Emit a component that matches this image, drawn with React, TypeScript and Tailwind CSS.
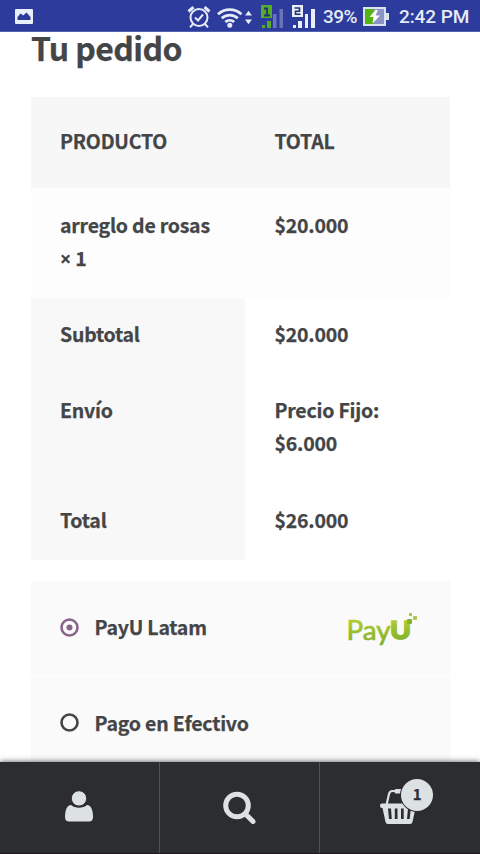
import React from "react";
import { clsx } from "clsx";

const totals = [
  { label: "Subtotal", lines: ["$20.000"] },
  { label: "Envío", lines: ["Precio Fijo:", "$6.000"] },
  { label: "Total", lines: ["$26.000"] },
];

const payments = [
  { label: "PayU Latam", selected: true, logo: true },
  { label: "Pago en Efectivo", selected: false, logo: false },
];

function StatusBar() {
  return (
    <header className="flex h-8 shrink-0 items-center border-b border-[#5260b0] bg-[#2c3b9c] pt-[2px] font-['Roboto',sans-serif] text-[19px] font-medium leading-none tracking-[-0.1px] text-[#e6ebf8] [-webkit-text-stroke:0px]">
      <svg className="ml-[15px] h-[15px] w-[18px]" viewBox="0 0 18 15">
        <rect width="18" height="15" rx="1" fill="#e8eefa" />
        <path d="M2.500 11V8L5.500 4.500l2.800 2L11.500 3.500l4 4.500v3z" fill="#2c3b9c" />
      </svg>
      {/* Alarm */}
      <svg className="ml-[154px] h-6 w-6" viewBox="0 0 24 24" fill="none" stroke="currentColor" strokeWidth="2">
        <circle cx="12" cy="12.500" r="8.500" />
        <path d="M8 12.500l3 3 5-6" />
        <path d="M1.500 6.500l5-4.300M22.500 6.500l-5-4.300" strokeWidth="3" />
        <path d="M6 19l-3 3.300M18 19l3 3.300" />
      </svg>
      {/* Wifi + traffic arrows */}
      <svg className="ml-[6px] h-[22px] w-9" viewBox="0 0 36 22" fill="none" stroke="currentColor" strokeWidth="2.800">
        <path d="M1 8.200a17.200 17.200 0 0 1 23.500 0" />
        <path d="M4.700 12.200a11.800 11.800 0 0 1 16.100 0" />
        <path d="M8.300 16a6.800 6.800 0 0 1 8.900 0" />
        <circle cx="12.800" cy="19.200" r="2.500" fill="currentColor" stroke="none" />
        <path d="M28 9.500l3.500-4.700 3.500 4.700zM28 13.500l3.500 4.700 3.500-4.700z" fill="currentColor" stroke="none" />
      </svg>
      {/* SIM 1 */}
      <svg className="ml-[8px] h-6 w-6" viewBox="0 0 24 24">
        <rect width="11" height="13" fill="#55ad27" />
        <path d="M3 3.500h3v7M3 10.500h6" fill="none" stroke="#203078" strokeWidth="1.800" />
        <path d="M1 20h3v3H1zM6 16h4v7H6z" fill="#55ad27" />
        <path d="M12 9h3.500v14H12zM18.500 4H22v19h-3.500z" fill="#6974b8" />
      </svg>
      {/* SIM 2 */}
      <svg className="ml-[7px] h-6 w-6" viewBox="0 0 24 24">
        <rect width="11" height="12" fill="#e8eefa" />
        <path d="M2.500 3h5v3.200h-4v3h5" fill="none" stroke="#203078" strokeWidth="1.600" />
        <path d="M1 20h3v3H1zM6 16h4v7H6zM13 9h3v14h-3zM19 4h4v19h-4z" fill="#e8eefa" />
      </svg>
      <span className="ml-[7px] w-[40px] tracking-[-0.500px]">39%</span>
      <svg className="h-[19px] w-[26px]" viewBox="0 0 26 19">
        <path d="M0 0h23v6h3v7h-3v6H0z" fill="#d9e2ef" />
        <path d="M2 2h9v15H2z" fill="#55b313" />
        <path d="M11 2h10v15H11z" fill="#8b95c5" />
        <path d="M12.500 3L6.500 10h4l-1 6.500L17 8.500h-4.500L15 3z" fill="#fff" />
      </svg>
      <span className="ml-[10px] whitespace-nowrap">2:42 PM</span>
    </header>
  );
}

function PayULogo() {
  return (
    <svg className="h-10 w-[76px]" viewBox="0 0 76 40">
      <defs>
        <linearGradient id="payu" x1="0" y1="0" x2="0" y2="1">
          <stop offset="0" stopColor="#c0d535" />
          <stop offset="1" stopColor="#78ad28" />
        </linearGradient>
      </defs>
      <g fill="url(#payu)" stroke="url(#payu)" fontFamily="Lato, sans-serif" letterSpacing="0">
        <text x="1.500" y="31" fontSize="27" fontWeight="400" strokeWidth="0.700" textLength="44" lengthAdjust="spacingAndGlyphs">Pay</text>
        <text x="45" y="30" fontSize="25" fontWeight="900" strokeWidth="1.500" textLength="21" lengthAdjust="spacingAndGlyphs">U</text>
      </g>
      <rect x="62" y="10" width="5" height="5" rx="1" fill="#84b425" />
      <rect x="64" y="4" width="3" height="3" fill="#a9c948" />
      <rect x="68" y="7" width="4" height="4" rx="1" fill="#a9c948" />
    </svg>
  );
}

function BottomBar() {
  return (
    <nav className="relative grid h-[92px] shrink-0 grid-cols-3 border-b border-[#25151d] bg-[#2c2d31] text-[#dce1e3] shadow-[0_0_6px_rgba(0,0,0,0.7)]">
      <a className="flex justify-center border-r border-[#505156] pt-[28px]">
        <svg className="mr-px h-8 w-7" viewBox="0 0 28 32" fill="currentColor">
          <path d="M6 15C2 15 0 20 0 27c0 3 1.500 4.500 4 4.500h20c2.500 0 4-1.500 4-4.500 0-7-2-12-6-12-2 1.700-5 2.700-8 2.700S8 16.700 6 15z" />
          <circle cx="14" cy="8.400" r="7.700" stroke="#2c2d31" />
        </svg>
      </a>
      <a className="flex justify-center border-r border-[#505156] pt-[29px]">
        <svg className="mr-px h-[33px] w-[33px]" viewBox="0 0 33 33" fill="none" stroke="currentColor">
          <circle cx="14" cy="14.500" r="11.300" strokeWidth="5" />
          <path d="M22.500 23l7.500 7.500" strokeWidth="5" strokeLinecap="round" />
        </svg>
      </a>
      <a className="relative flex justify-center pt-[26px]">
        <svg className="mr-[2px] h-9 w-[38px]" viewBox="0 0 38 36" fill="none" stroke="currentColor" strokeWidth="2.200">
          <path d="M6.500 17L9 6q.6-3 3.500-3H17M31.500 17L29 6q-.6-3-3.500-3H21" />
          <rect x="14.500" y="1" width="9" height="4.500" rx="1.500" fill="currentColor" stroke="none" />
          <path
            fillRule="evenodd"
            fill="currentColor"
            stroke="none"
            d="M2 15.500h34q2 0 2 2.200t-2 2.200h-.500l-3 14q-.4 2-2.500 2H8q-2.100 0-2.500-2l-3-14H2q-2 0-2-2.200t2-2.200zM8 20.500l1 10.500h2.800L11 20.500zM14.800 20.500V31h2.700V20.500zM21 20.500V31h2.700V20.500zM28 20.500L27 31h2.700l1.100-10.500z"
          />
        </svg>
        <span className="absolute left-[81px] top-[17px] flex h-8 w-8 items-center justify-center rounded-full bg-[#dce1e3] pb-[3px] text-[15px] text-[#2c2d31] shadow-[0_0_0_1px_#2c2d31]">
          1
        </span>
      </a>
    </nav>
  );
}

export default function App() {
  return (
    <div className="flex h-[854px] w-[480px] flex-col overflow-hidden bg-white font-['Noto_Sans_CJK_JP',sans-serif] text-[19.500px] font-bold leading-[33.300px] tracking-[-0.220px] text-[#434547] [-webkit-text-stroke:0.250px]">
      <StatusBar />
      <main className="min-h-0 flex-1 px-[31px]">
        <h3 className="h-[65px] text-[32px] leading-[34px] tracking-[-0.600px]">
          <span className="relative -top-0.5">Tu pedido</span>
        </h3>

        <table className="w-[419px] table-fixed border-collapse text-left">
          <thead className="bg-[#f7f7f7]">
            <tr className="h-[91px]">
              <th className="w-[214px] pb-[3px] pl-[29px]">PRODUCTO</th>
              <th className="pb-[3px] pl-[29.500px]">TOTAL</th>
            </tr>
          </thead>
          <tbody className="bg-[#fdfdfd]">
            <tr className="h-[110px]">
              <td className="pl-[29px] pt-[20px] align-top">
                arreglo de rosas
                <br />
                <span className="font-['Open_Sans',sans-serif]">×</span> 1
              </td>
              <td className="pl-[29.500px] pt-[20px] align-top">$20.000</td>
            </tr>
          </tbody>
          <tfoot>
            {totals.map((row) => (
              <tr key={row.label} className={row.lines.length > 1 ? "h-[110px]" : "h-[76px]"}>
                <th className="bg-[#f8f8f8] pl-[29px] pt-[19px] align-top">{row.label}</th>
                <td className="pl-[29.500px] pt-[19px] align-top">
                  {row.lines.map((line) => (
                    <div key={line}>{line}</div>
                  ))}
                </td>
              </tr>
            ))}
          </tfoot>
        </table>

        <ul className="mt-[21px] w-[419px]">
          {payments.map((p) => (
            <li key={p.label} className="flex h-24 items-center border-b border-white bg-[#fafafa] pl-[29px]">
              <svg
                className={clsx("h-[19px] w-[19px]", p.selected ? "mt-[-3px] text-[#8b648b]" : "mt-[-4px] text-[#434547]")}
                viewBox="0 0 19 19"
              >
                <circle cx="9.500" cy="9.500" r="8" fill="none" stroke="currentColor" strokeWidth="2.600" />
                {p.selected && <circle cx="9.500" cy="9.500" r="3" fill="currentColor" />}
              </svg>
              <span className="ml-[15.500px] mt-[-4px]">{p.label}</span>
              {p.logo && (
                <span className="ml-auto mr-[29px]">
                  <PayULogo />
                </span>
              )}
            </li>
          ))}
        </ul>
      </main>
      <BottomBar />
    </div>
  );
}
